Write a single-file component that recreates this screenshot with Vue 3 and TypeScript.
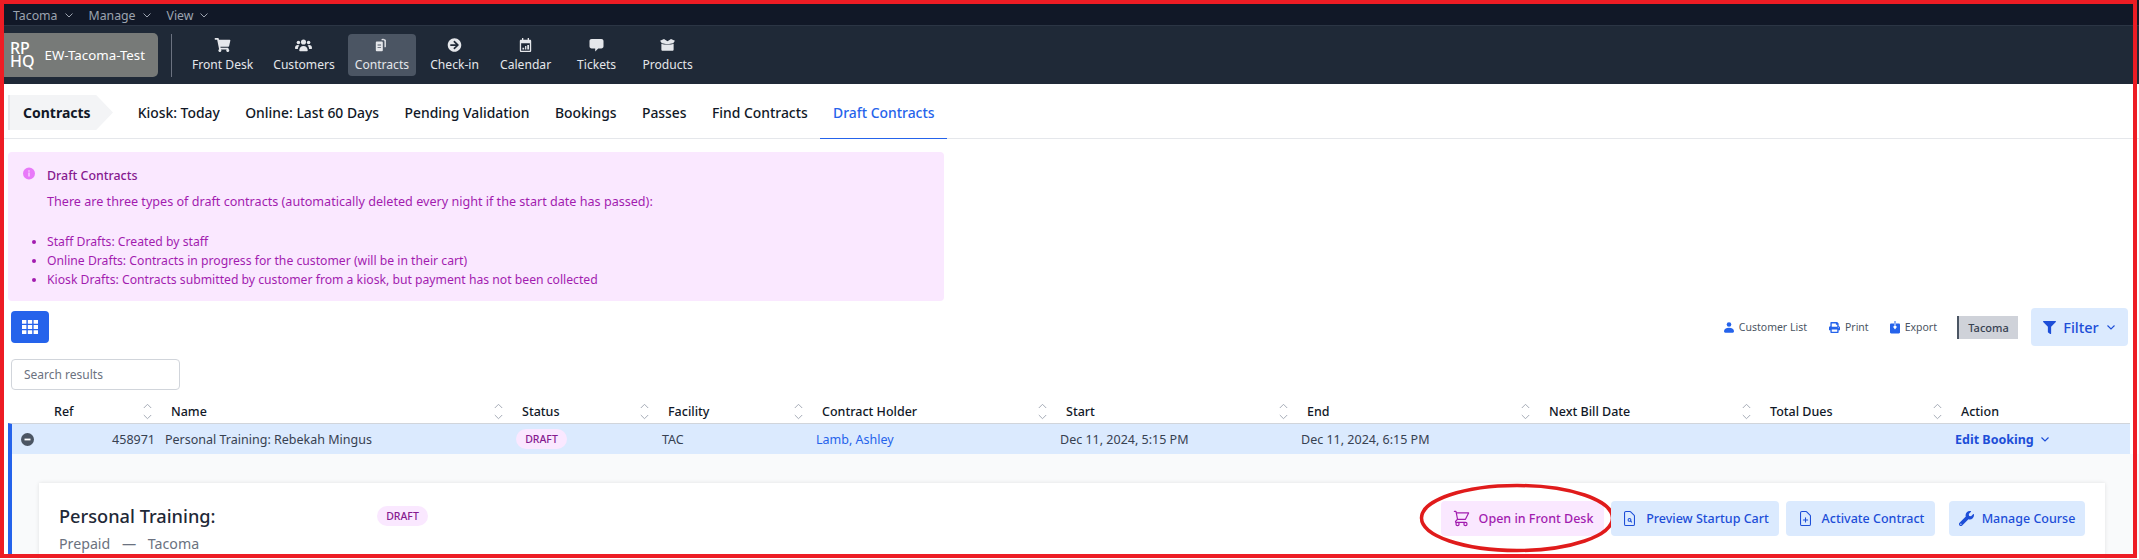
<script setup lang="ts">
const topMenus = ['Tacoma', 'Manage', 'View']
const navItems = [
  { label: 'Front Desk', icon: 'cart' },
  { label: 'Customers', icon: 'users' },
  { label: 'Contracts', icon: 'contracts', active: true },
  { label: 'Check-in', icon: 'checkin' },
  { label: 'Calendar', icon: 'calendar' },
  { label: 'Tickets', icon: 'tickets' },
  { label: 'Products', icon: 'products' },
]
const tabs = ['Kiosk: Today', 'Online: Last 60 Days', 'Pending Validation', 'Bookings', 'Passes', 'Find Contracts', 'Draft Contracts']
const columns = ['Ref', 'Name', 'Status', 'Facility', 'Contract Holder', 'Start', 'End', 'Next Bill Date', 'Total Dues']
const bullets = [
  'Staff Drafts: Created by staff',
  'Online Drafts: Contracts in progress for the customer (will be in their cart)',
  'Kiosk Drafts: Contracts submitted by customer from a kiosk, but payment has not been collected',
]
</script>

<template>
  <div class="page">
    <div class="top-menu">
      <span v-for="m in topMenus" :key="m" class="top-menu-item">
        {{ m }}
        <svg width="10" height="10" viewBox="0 0 10 10" fill="none" stroke="currentColor" stroke-width="1"><path d="M1.5 3.5 5 7l3.5-3.5" /></svg>
      </span>
    </div>

    <div class="nav-bar">
      <div class="logo-pill">
        <span class="logo-mark">RP<br />HQ</span>
        <span class="logo-name">EW-Tacoma-Test</span>
      </div>
      <div class="nav-divider"></div>
      <div class="nav-items">
        <div v-for="item in navItems" :key="item.label" class="nav-item" :class="{ active: item.active }">
          <svg v-if="item.icon === 'cart'" class="nav-icon" viewBox="0 0 576 512" fill="currentColor"><path d="M528.12 301.319l47.273-208C578.806 78.301 567.391 64 551.99 64H159.208l-9.166-44.81C147.758 8.021 137.93 0 126.529 0H24C10.745 0 0 10.745 0 24v16c0 13.255 10.745 24 24 24h69.883l70.248 343.435C147.325 417.1 136 435.222 136 456c0 30.928 25.072 56 56 56s56-25.072 56-56c0-15.674-6.447-29.835-16.824-40h209.647C430.447 426.165 424 440.326 424 456c0 30.928 25.072 56 56 56s56-25.072 56-56c0-22.172-12.888-41.332-31.579-50.405l5.517-24.276c3.413-15.018-8.002-29.319-23.403-29.319H218.117l-6.545-32h293.145c11.206 0 20.92-7.754 23.403-18.681z" /></svg>
          <svg v-else-if="item.icon === 'users'" class="nav-icon" viewBox="0 0 20 16" fill="currentColor"><circle cx="10" cy="4.5" r="3" /><circle cx="4" cy="5" r="2.1" /><circle cx="16" cy="5" r="2.1" /><path d="M5 14.5c0-3.4 2-5.4 5-5.4s5 2 5 5.4c0 .5-.4.9-.9.9H5.9c-.5 0-.9-.4-.9-.9zM0 11.5C0 9.5 1.3 8 3.2 8c.9 0 1.5.2 2 .7C4 9.7 3.5 11 3.4 12.8H1c-.6 0-1-.5-1-1.3zM20 11.5C20 9.5 18.7 8 16.8 8c-.9 0-1.5.2-2 .7 1.2 1 1.7 2.3 1.8 4.1H19c.6 0 1-.5 1-1.3z" /></svg>
          <svg v-else-if="item.icon === 'contracts'" class="nav-icon" viewBox="0 0 16 16" fill="currentColor"><path d="M8 1.5 10 .5c.4 1 .7 1 1.8.9l1.2 1v7.3c0 .7-.3 1-1 1h-.6V4.2c0-1-.6-1.5-1.5-1.5H8z" /><path fill-rule="evenodd" d="M2.5 4h6c.7 0 1 .3 1 1v9c0 .7-.3 1-1 1h-6c-.7 0-1-.3-1-1V5c0-.7.3-1 1-1zm1 3.5v1h4v-1zm0 3v1h4v-1z" /></svg>
          <svg v-else-if="item.icon === 'checkin'" class="nav-icon" viewBox="0 0 512 512" fill="currentColor"><path d="M256 8c137 0 248 111 248 248S393 504 256 504 8 393 8 256 119 8 256 8zm-28.9 143.6l75.5 72.4H120c-13.3 0-24 10.7-24 24v16c0 13.3 10.7 24 24 24h182.6l-75.5 72.4c-9.7 9.3-9.9 24.8-.4 34.3l11 10.9c9.4 9.4 24.6 9.4 33.9 0L404.3 273c9.4-9.4 9.4-24.6 0-33.9L271.6 106.3c-9.4-9.4-24.6-9.4-33.9 0l-11 10.9c-9.5 9.6-9.3 25.1.4 34.4z" /></svg>
          <svg v-else-if="item.icon === 'calendar'" class="nav-icon" viewBox="0 0 16 16" fill="currentColor"><path fill-rule="evenodd" d="M4 0h1.5v2h5V0H12v2h1c1 0 1.5.5 1.500 1.500v11c0 1-.5 1.500-1.500 1.500H3c-1 0-1.500-.5-1.500-1.500v-11C1.500 2.500 2 2 3 2h1zM3 6v8.500h10V6zm1.500 5h2v2h-2zm3-2h1.500v4H7.500zm2.500-1h2v5h-2z" /></svg>
          <svg v-else-if="item.icon === 'tickets'" class="nav-icon" viewBox="0 0 16 16" fill="currentColor"><path d="M2.5 1h11C15 1 16 2 16 3.5v6c0 1.500-1 2.500-2.500 2.500H10l-3.500 3.500V12h-4C1 12 0 11 0 9.500v-6C0 2 1 1 2.500 1z" /></svg>
          <svg v-else class="nav-icon" viewBox="0 0 18 16" fill="currentColor"><path d="M2 6.500c2.500 1 4 1 7 1s4.500 0 7-1V13c0 1-.5 1.500-1.500 1.500h-11C2.500 14.500 2 14 2 13z" /><path d="M.5 3 5 1l4 2.800 4-2.800 4.500 2-2 3c-2 .7-4 .8-6.500.8S4.500 6.700 2.500 6z" /></svg>
          <span>{{ item.label }}</span>
        </div>
      </div>
    </div>

    <div class="tabs">
      <div class="crumb">Contracts</div>
      <div class="tab-list">
        <span v-for="t in tabs" :key="t" class="tab" :class="{ current: t === 'Draft Contracts' }">{{ t }}</span>
      </div>
    </div>

    <div class="alert">
      <svg class="alert-icon" viewBox="0 0 20 20" fill="#e879f9"><path fill-rule="evenodd" d="M10 0a10 10 0 1 1 0 20 10 10 0 0 1 0-20zM9 8.500V15h2V8.500zM10 4.500a1.300 1.300 0 1 0 0 2.600 1.300 1.300 0 0 0 0-2.600z" /></svg>
      <div>
        <div class="alert-title">Draft Contracts</div>
        <p class="alert-text">There are three types of draft contracts (automatically deleted every night if the start date has passed):</p>
        <ul class="alert-list">
          <li v-for="b in bullets" :key="b">{{ b }}</li>
        </ul>
      </div>
    </div>

    <div class="toolbar">
      <button class="grid-btn">
        <svg width="16" height="14" viewBox="0 0 16 14" fill="#fff"><path d="M0 0h4.400v3.800H0zM5.800 0h4.400v3.800H5.800zM11.600 0H16v3.800h-4.400zM0 5.100h4.400v3.800H0zM5.800 5.100h4.400v3.800H5.800zM11.600 5.100H16v3.800h-4.400zM0 10.200h4.400V14H0zM5.800 10.200h4.400V14H5.800zM11.600 10.200H16V14h-4.400z" /></svg>
      </button>
      <div class="tools">
        <span class="tool">
          <svg width="10" height="11" viewBox="0 0 10 11" fill="#2563eb"><circle cx="5" cy="2.500" r="2.300" /><path d="M0 9.200C0 7 2 5.800 5 5.800s5 1.200 5 3.400c0 1.100-1 1.600-2 1.600H2c-1 0-2-.5-2-1.600z" /></svg>
          Customer List
        </span>
        <span class="tool tool-print">
          <svg width="11" height="11" viewBox="0 0 512 512" fill="#2563eb"><path d="M448 192V77.250c0-8.490-3.370-16.620-9.370-22.630L393.370 9.370c-6-6-14.140-9.370-22.630-9.370H96C78.330 0 64 14.330 64 32v160c-35.350 0-64 28.650-64 64v112c0 8.840 7.160 16 16 16h48v96c0 17.670 14.330 32 32 32h320c17.670 0 32-14.330 32-32v-96h48c8.840 0 16-7.160 16-16V256c0-35.350-28.650-64-64-64zm-64 256H128v-96h256v96zm0-224H128V64h192v48c0 8.840 7.160 16 16 16h48v96zm48 72c-13.250 0-24-10.750-24-24 0-13.260 10.750-24 24-24s24 10.740 24 24c0 13.250-10.750 24-24 24z" /></svg>
          Print
        </span>
        <span class="tool tool-export">
          <svg width="10" height="13" viewBox="0 0 10 13" fill="#2563eb"><path fill-rule="evenodd" d="M1.200 2.500H4v3H2.800L5 8.500l2.200-3H6v-3h2.800c.7 0 1.200.5 1.200 1.200v7.600c0 .7-.5 1.200-1.200 1.200H1.200C.5 12.500 0 12 0 11.300V3.700c0-.7.500-1.200 1.200-1.200z" /><path d="M4.500 0h1v5h-1z" /></svg>
          Export
        </span>
        <span class="chip">Tacoma</span>
        <button class="filter-btn">
          <svg width="13" height="13" viewBox="0 0 512 512" fill="#1d4ed8"><path d="M487.976 0H24.028C2.710 0-8.047 25.866 7.058 40.971L192 225.941V432c0 7.831 3.821 15.170 10.237 19.662l80 55.980C298.020 518.690 320 507.493 320 487.980V225.941l184.947-184.970C520.021 25.896 509.338 0 487.976 0z" /></svg>
          <span>Filter</span>
          <svg width="10" height="10" viewBox="0 0 10 10" fill="none" stroke="#1d4ed8" stroke-width="1.100"><path d="M1.500 3.500 5 7l3.500-3.500" /></svg>
        </button>
      </div>
    </div>

    <div class="search-row">
      <input class="search" placeholder="Search results" />
    </div>

    <div class="table">
      <div class="table-grid head-row">
        <div></div>
        <div v-for="c in columns" :key="c" class="head-cell">
          <span>{{ c }}</span>
          <svg class="sort" width="9" height="17" viewBox="0 0 9 17" fill="none" stroke="#9ca3af" stroke-width="0.900"><path d="M.8 5 4.500 1.300 8.200 5M.8 12l3.700 3.700L8.200 12" /></svg>
        </div>
        <div class="head-cell"><span>Action</span></div>
      </div>
      <div class="table-grid body-row">
        <div class="expander">
          <svg width="13" height="13" viewBox="0 0 13 13"><circle cx="6.500" cy="6.500" r="6.500" fill="#4b5563" /><path d="M3.500 5.600h6v1.800h-6z" fill="#fff" /></svg>
        </div>
        <div class="cell ref">458971</div>
        <div class="cell">Personal Training: Rebekah Mingus</div>
        <div class="cell"><span class="badge">DRAFT</span></div>
        <div class="cell">TAC</div>
        <div class="cell link">Lamb, Ashley</div>
        <div class="cell">Dec 11, 2024, 5:15 PM</div>
        <div class="cell">Dec 11, 2024, 6:15 PM</div>
        <div class="cell"></div>
        <div class="cell"></div>
        <div class="cell action">
          Edit Booking
          <svg width="10" height="10" viewBox="0 0 10 10" fill="none" stroke="#1d4ed8" stroke-width="1.200"><path d="M1.500 3.500 5 7l3.500-3.500" /></svg>
        </div>
      </div>
      <div class="detail">
        <div class="card">
          <div class="card-title">
            <div class="title-line">
              <h2>Personal Training:</h2>
              <span class="badge">DRAFT</span>
            </div>
            <div class="sub">Prepaid <span class="dash">—</span> Tacoma</div>
          </div>
          <div class="actions">
            <button class="btn btn-pink">
              <svg width="19" height="19" viewBox="0 0 24 24" fill="none" stroke="currentColor" stroke-width="1.500" stroke-linecap="round" stroke-linejoin="round"><path d="M3 3h2l.4 2M7 13h10l4-8H5.400M7 13L5.400 5M7 13l-2.293 2.293c-.63.63-.184 1.707.707 1.707H17m0 0a2 2 0 100 4 2 2 0 000-4zm-8 2a2 2 0 11-4 0 2 2 0 014 0z" /></svg>
              Open in Front Desk
              <svg class="ellipse" width="196" height="70" viewBox="0 0 196 70" fill="none"><ellipse cx="98" cy="35" rx="95.500" ry="32.500" stroke="#e01b1b" stroke-width="3.500" /></svg>
            </button>
            <button class="btn">
              <svg width="17" height="19" viewBox="0 0 24 24" fill="none" stroke="currentColor" stroke-width="1.500" stroke-linecap="round" stroke-linejoin="round"><path d="M7 22h10a2 2 0 002-2V8.400a1 1 0 00-.3-.7l-5.400-5.400a1 1 0 00-.7-.3H7a2 2 0 00-2 2v16a2 2 0 002 2z" /><circle cx="12" cy="14" r="2" /><path d="M13.500 15.500 15 17" /></svg>
              Preview Startup Cart
            </button>
            <button class="btn">
              <svg width="17" height="19" viewBox="0 0 24 24" fill="none" stroke="currentColor" stroke-width="1.500" stroke-linecap="round" stroke-linejoin="round"><path d="M9 14h6m-3-3v6m5 5H7a2 2 0 01-2-2V4a2 2 0 012-2h5.600a1 1 0 01.7.3l5.400 5.400a1 1 0 01.3.7V20a2 2 0 01-2 2z" /></svg>
              Activate Contract
            </button>
            <button class="btn btn-manage">
              <svg width="15" height="15" viewBox="0 0 512 512" fill="currentColor"><path d="M507.730 109.100c-2.240-9.030-13.540-12.090-20.120-5.510l-74.360 74.360-67.880-11.310-11.310-67.880 74.360-74.360c6.620-6.620 3.430-17.900-5.660-20.160-47.380-11.740-99.550.91-136.580 37.930-39.640 39.640-50.550 97.100-34.050 147.200L18.740 402.760c-24.990 24.990-24.990 65.510 0 90.500 24.990 24.990 65.510 24.990 90.500 0l213.210-213.210c50.120 16.710 107.470 5.680 147.370-34.220 37.070-37.070 49.700-89.320 37.910-136.730zM64 472c-13.250 0-24-10.750-24-24 0-13.260 10.750-24 24-24s24 10.740 24 24c0 13.250-10.750 24-24 24z" /></svg>
              Manage Course
            </button>
          </div>
        </div>
      </div>
    </div>

    <div class="red-frame"></div>
  </div>
</template>

<style scoped>
.page {
  position: relative;
  width: 2139px;
  height: 559px;
  overflow: hidden;
  background: #fff;
  font-family: "Noto Sans", "Open Sans", sans-serif;
  color: #374151;
}

.top-menu {
  height: 26px;
  box-sizing: border-box;
  padding: 5px 0 0 13px;
  display: flex;
  align-items: center;
  gap: 15px;
  background: #111827;
  border-bottom: 1px solid #2b3544;
}

.top-menu-item {
  display: flex;
  align-items: center;
  gap: 6px;
  font-size: 12.3px;
  color: #9ca3af;
}

.nav-bar {
  height: 58px;
  display: flex;
  align-items: center;
  background: #1f2937;
}

.logo-pill {
  width: 158px;
  height: 44px;
  box-sizing: border-box;
  padding-left: 10px;
  display: flex;
  align-items: center;
  gap: 10px;
  background: #777a78;
  border-radius: 0 5px 5px 0;
  color: #fff;
}

.logo-mark {
  font-size: 16px;
  line-height: 13px;
  font-weight: 500;
}

.logo-name {
  font-size: 13.3px;
  white-space: nowrap;
}

.nav-divider {
  width: 1px;
  height: 43px;
  margin-left: 13px;
  background: #6b7280;
}

.nav-items {
  display: flex;
  align-items: center;
  gap: 6px;
  margin-left: 13px;
}

.nav-item {
  min-width: 65px;
  height: 42px;
  box-sizing: border-box;
  padding: 4px 7px 0;
  display: flex;
  flex-direction: column;
  align-items: center;
  gap: 5px;
  border-radius: 4px;
  font-size: 12.1px;
  line-height: 16px;
  color: #e5e7eb;
  white-space: nowrap;
}

.nav-item.active {
  background: #4b5563;
}

.nav-icon {
  height: 14px;
  width: 17px;
  color: #e5e7eb;
}

.tabs {
  height: 55px;
  box-sizing: border-box;
  padding-left: 8px;
  display: flex;
  align-items: center;
  border-bottom: 1px solid #e5e7eb;
}

.crumb {
  width: 105px;
  height: 35px;
  box-sizing: border-box;
  padding-left: 13px;
  margin-top: 3px;
  display: flex;
  align-items: center;
  font-size: 14px;
  font-weight: 700;
  color: #111827;
  background: #f3f4f6;
  border-left: 2px solid #e5e7eb;
  clip-path: polygon(0 0, 84% 0, 100% 50%, 84% 100%, 0 100%);
}

.tab-list {
  display: flex;
  align-self: stretch;
  margin-left: 12px;
}

.tab {
  display: flex;
  align-items: center;
  padding: 3px 12.7px 0;
  font-size: 13.9px;
  font-weight: 500;
  color: #111827;
  white-space: nowrap;
}

.tab.current {
  color: #2563eb;
  border-bottom: 1px solid #2563eb;
  margin-bottom: -1px;
}

.alert {
  width: 936px;
  height: 149px;
  box-sizing: border-box;
  margin: 13px 0 0 8px;
  padding: 15px 15px 0;
  display: flex;
  gap: 12px;
  background: #fae8ff;
  border-radius: 4px;
  font-size: 12.2px;
  color: #a21caf;
}

.alert-icon {
  width: 12px;
  height: 13px;
  flex: none;
}

.alert-title {
  font-size: 12.4px;
  font-weight: 500;
  color: #86198f;
  line-height: 18px;
}

.alert-text {
  margin: 8px 0 0;
  font-size: 12.6px;
  line-height: 18px;
}

.alert-list {
  margin: 21px 0 0;
  padding: 0;
  list-style: disc;
  line-height: 19.2px;
}

.toolbar {
  height: 38px;
  margin: 7px 0 0 11px;
  padding-right: 11px;
  display: flex;
  justify-content: space-between;
  align-items: flex-start;
}

.grid-btn {
  width: 38px;
  height: 32px;
  margin-top: 3px;
  display: flex;
  align-items: center;
  justify-content: center;
  border: 0;
  padding: 0;
  border-radius: 4px;
  background: #2563eb;
}

.tools {
  display: flex;
  align-items: center;
  height: 38px;
  font-size: 10.5px;
  color: #4b5563;
}

.tool {
  display: flex;
  align-items: center;
  gap: 5px;
}

.tool-print {
  margin-left: 22px;
}

.tool-export {
  margin-left: 21px;
}

.chip {
  width: 61px;
  height: 23px;
  box-sizing: border-box;
  margin-left: 20px;
  display: flex;
  align-items: center;
  justify-content: center;
  border-left: 2px solid #4b5563;
  background: #cfd2d9;
  font-size: 11px;
  font-weight: 500;
  color: #374151;
}

.filter-btn {
  width: 97px;
  height: 38px;
  margin-left: 13px;
  display: flex;
  align-items: center;
  justify-content: center;
  gap: 7px;
  border: 0;
  padding: 0;
  border-radius: 4px;
  background: #dbeafe;
  font-family: inherit;
  font-size: 14.5px;
  font-weight: 500;
  color: #1d4ed8;
}

.search-row {
  margin: 13px 0 0 11px;
}

.search {
  display: block;
  width: 169px;
  height: 31px;
  box-sizing: border-box;
  padding: 0 12px;
  border: 1px solid #d1d5db;
  border-radius: 4px;
  font-family: inherit;
  font-size: 12px;
  outline: 0;
}

.search::placeholder {
  color: #6b7280;
}

.table {
  margin: 3px 0 0 8px;
}

.table-grid {
  display: grid;
  width: 2122px;
  box-sizing: border-box;
  grid-template-columns: 30px 117px 351px 146px 154px 244px 241px 242px 221px 191px 181px;
}

.head-row {
  height: 30px;
  border-left: 4px solid transparent;
}

.head-cell {
  display: flex;
  align-items: center;
  justify-content: space-between;
  padding: 6px 7px 0 12px;
  font-size: 12.5px;
  font-weight: 500;
  color: #111827;
}

.sort {
  flex: none;
}

.body-row {
  height: 31px;
  border-left: 4px solid #2563eb;
  border-top: 1px solid #d1d5db;
  background: #dbeafe;
  font-size: 12.5px;
}

.expander {
  display: flex;
  align-items: center;
  padding-left: 9px;
}

.cell {
  display: flex;
  align-items: center;
  padding: 0 6px;
  white-space: nowrap;
  color: #374151;
}

.ref {
  justify-content: flex-end;
  padding-right: 4px;
}

.link {
  color: #2563eb;
}

.action {
  gap: 6px;
  font-weight: 700;
  color: #1d4ed8;
}

.badge {
  display: inline-flex;
  align-items: center;
  justify-content: center;
  width: 51px;
  height: 20px;
  border-radius: 10px;
  background: #fae8ff;
  font-size: 10.5px;
  font-weight: 500;
  color: #86198f;
}

.detail {
  height: 100px;
  box-sizing: border-box;
  padding: 29px 34px 0 27px;
  border-left: 4px solid #2563eb;
  background: #f9fafb;
}

.card {
  height: 120px;
  box-sizing: border-box;
  padding: 18px 20px 0;
  display: flex;
  justify-content: space-between;
  background: #fff;
  box-shadow: 0 0 4px rgba(0, 0, 0, 0.1);
}

.title-line {
  display: flex;
  align-items: center;
  height: 30px;
}

.title-line h2 {
  width: 318px;
  margin: 0;
  font-size: 18.2px;
  font-weight: 500;
  color: #1f2937;
}

.sub {
  margin-top: 3px;
  font-size: 14.2px;
  color: #6b7280;
}

.dash {
  margin: 0 8px;
}

.actions {
  display: flex;
  gap: 7px;
}

.btn {
  position: relative;
  height: 35px;
  width: 168px;
  display: flex;
  align-items: center;
  justify-content: center;
  gap: 8px;
  border: 0;
  padding: 0;
  border-radius: 4px;
  background: #dbeafe;
  font-family: inherit;
  font-size: 12.5px;
  font-weight: 500;
  color: #1d4ed8;
  white-space: nowrap;
}

.btn:nth-child(1) {
  width: 163px;
}

.btn:nth-child(3) {
  width: 149px;
}

.btn-manage {
  width: 136px;
  margin-left: 7px;
}

.btn-pink {
  background: #fae8ff;
  color: #a21caf;
}

.ellipse {
  position: absolute;
  left: -22px;
  top: -18px;
}

.red-frame {
  position: absolute;
  inset: 0 2px 1px 0;
  border: 4px solid #ed1c24;
  pointer-events: none;
}
</style>

<style>
html, body {
  margin: 0;
  overflow: hidden;
}
</style>
